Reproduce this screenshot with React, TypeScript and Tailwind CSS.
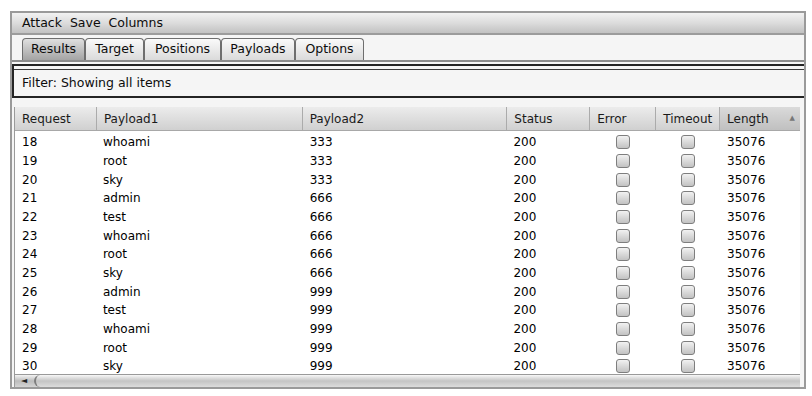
import React from "react";

const cols = [
  { name: "Request", w: "w-[82px]" },
  { name: "Payload1", w: "w-[206px]" },
  { name: "Payload2", w: "w-[205px]" },
  { name: "Status", w: "w-[83px]" },
  { name: "Error", w: "w-[66px]" },
  { name: "Timeout", w: "w-[64px]" },
  { name: "Length", w: "w-[80px]" },
];

const words = ["admin", "test", "whoami", "root", "sky"];

const rows = Array.from({ length: 13 }, (_, i) => {
  const req = 18 + i;
  const idx = req - 16;
  return {
    req,
    p1: words[idx % 5],
    p2: ["333", "666", "999"][Math.floor(idx / 5) % 3],
  };
});

const tabs = [
  { label: "Results", w: "w-[63px]" },
  { label: "Target", w: "w-[59px]" },
  { label: "Positions", w: "w-[77px]" },
  { label: "Payloads", w: "w-[74px]" },
  { label: "Options", w: "w-[69px]" },
];

const Check = () => (
  <div className="w-[14px] h-[14px] rounded-[3px] border border-[#7e7e7e] bg-gradient-to-b from-[#f2f2f2] to-[#c2c2c2]" />
);

export default function App() {
  return (
    <div
      className="w-[812px] h-[396px] bg-white pt-[11px] pl-[10px] text-[#0c0c0c]"
      style={{ fontFamily: '"DejaVu Sans", sans-serif' }}
    >
      <div className="w-[796px] h-[378px] border-2 border-[#9a9a9a] bg-[#f5f5f5] flex flex-col">
        {/* menu */}
        <div className="h-[22px] shrink-0 flex items-center gap-[8px] pl-[10px] text-[12.5px] bg-gradient-to-b from-[#f2f2f2] via-[#dcdcdc] to-[#c2c2c2] border-b-2 border-[#9c9c9c]">
          <span>Attack</span>
          <span>Save</span>
          <span>Columns</span>
        </div>

        {/* tabs */}
        <div className="h-[25px] shrink-0 flex items-end pl-[10px]">
          {tabs.map((t, i) => (
            <div
              key={t.label}
              className={`${t.w} h-[22px] flex items-center justify-center text-[12.5px] rounded-t-[4px] border border-b-0 border-[#6e6e6e] ${
                i === 0
                  ? "bg-gradient-to-b from-[#e0e0e0] to-[#a4a4a4]"
                  : "bg-gradient-to-b from-[#fafafa] to-[#dadada]"
              }`}
            >
              {t.label}
            </div>
          ))}
        </div>
        <div className="h-[2px] shrink-0 bg-[#8c8c8c]" />
        <div className="h-[2px] shrink-0" />

        {/* filter */}
        <div className="shrink-0 border-t-2 border-l-2 border-b-2 border-[#242424]">
          <div className="h-[3px]" />
          <div className="h-[27px] border-t border-[#3a3a3a] flex items-center pl-[8px] text-[12.5px]">
            Filter: Showing all items
          </div>
        </div>

        <div className="h-[9px] shrink-0" />

        {/* table */}
        <div className="flex-1 ml-[2px] mr-[4px] flex flex-col border-l border-[#9a9a9a] bg-white min-h-0">
          <div className="h-[24px] shrink-0 flex border-b border-[#a8a8a8] text-[12px] text-[#1a1a1a]">
            {cols.map((c, i) => (
              <div
                key={c.name}
                className={`${c.w} h-full flex items-center pl-[7px] border-r border-[#ababab] ${
                  i === 6
                    ? "bg-gradient-to-b from-[#dadada] to-[#c0c0c0] justify-between pr-[5px] border-r-0"
                    : "bg-gradient-to-b from-[#ececec] to-[#d0d0d0]"
                }`}
              >
                <span>{c.name}</span>
                {i === 6 && <span className="text-[7px] text-[#777]">▲</span>}
              </div>
            ))}
          </div>
          <div className="flex-1 min-h-0 overflow-hidden pt-[2px]">
            {rows.map((r) => (
              <div key={r.req} className="h-[18.67px] flex items-center text-[12px] text-black">
                <div className="w-[82px] pl-[7px]">{r.req}</div>
                <div className="w-[206px] pl-[6px]">{r.p1}</div>
                <div className="w-[205px] pl-[7px]">{r.p2}</div>
                <div className="w-[83px] pl-[6px]">200</div>
                <div className="w-[66px] flex justify-center">
                  <Check />
                </div>
                <div className="w-[64px] flex justify-center">
                  <Check />
                </div>
                <div className="w-[80px] pl-[7px]">35076</div>
              </div>
            ))}
          </div>
          {/* scrollbar */}
          <div className="h-[13px] shrink-0 flex items-stretch bg-gradient-to-b from-[#f4f4f4] via-[#bcbcbc] to-[#d4d4d4] border-t border-[#9a9a9a]">
            <div className="w-[18px] flex items-center justify-center text-[8px] text-[#222]">◄</div>
            <div className="flex-1 ml-[1px] rounded-l-[10px] border-l-2 border-[#7e7e7e] bg-gradient-to-b from-[#f8f8f8] via-[#c4c4c4] to-[#dcdcdc]" />
          </div>
        </div>
      </div>
    </div>
  );
}
